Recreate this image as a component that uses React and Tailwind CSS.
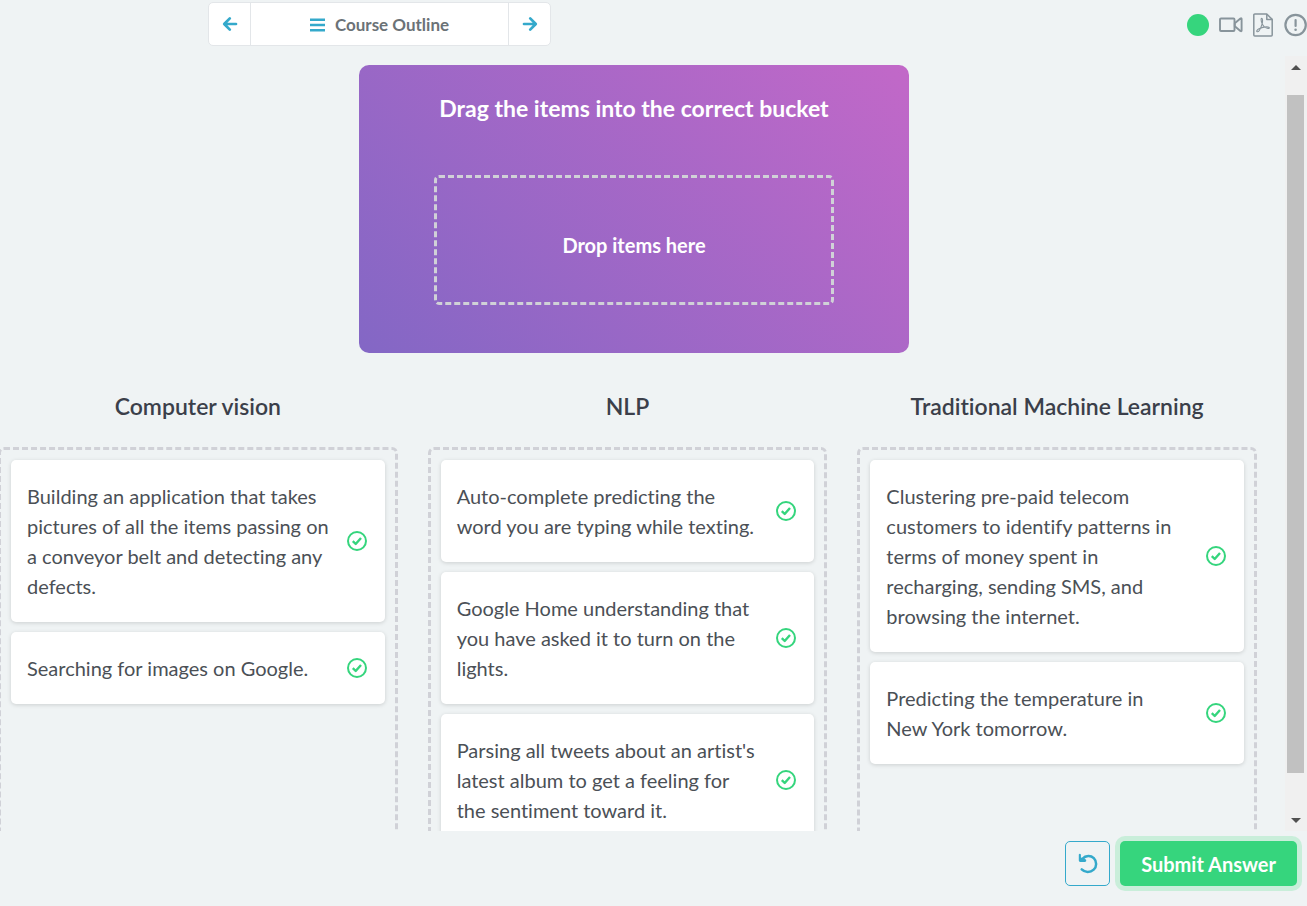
import React from "react";

const buckets = [
  {
    title: "Computer vision",
    items: [
      "Building an application that takes pictures of all the items passing on a conveyor belt and detecting any defects.",
      "Searching for images on Google.",
    ],
  },
  {
    title: "NLP",
    items: [
      "Auto-complete predicting the word you are typing while texting.",
      "Google Home understanding that you have asked it to turn on the lights.",
      "Parsing all tweets about an artist's latest album to get a feeling for the sentiment toward it.",
    ],
  },
  {
    title: "Traditional Machine Learning",
    items: [
      "Clustering pre-paid telecom customers to identify patterns in terms of money spent in recharging, sending SMS, and browsing the internet.",
      "Predicting the temperature in New York tomorrow.",
    ],
  },
];

function Arrow({ flip }) {
  return (
    <svg
      viewBox="0 0 16 16"
      className={flip ? "size-4 rotate-180" : "size-4"}
      fill="none"
      stroke="currentColor"
      strokeWidth="2.7"
      strokeLinecap="round"
      strokeLinejoin="round"
      aria-hidden="true"
    >
      <path d="M14 8H2.5M7.8 2.4L2.2 8l5.6 5.6" />
    </svg>
  );
}

function MenuIcon() {
  return (
    <svg viewBox="0 0 15 14" className="h-3.5 w-[15px]" fill="currentColor" aria-hidden="true">
      <path d="M0 .6h15V3H0zM0 5.800h15v2.400H0zM0 11h15v2.400H0z" />
    </svg>
  );
}

function VideoIcon() {
  return (
    <svg viewBox="0 0 24 16" className="h-4 w-6" fill="none" stroke="currentColor" strokeWidth="1.9" strokeLinejoin="round" aria-hidden="true">
      <rect x="1" y="1.5" width="14.5" height="12.5" rx="1" />
      <path d="M15.800 6.200L21.400 1.500Q22.600.900 22.600 2v11.500q0 1.100-1.200.500l-5.600-4.700z" />
    </svg>
  );
}

function PdfIcon() {
  return (
    <svg viewBox="0 0 20 24" className="h-6 w-5" fill="none" stroke="currentColor" strokeWidth="1.5" strokeLinejoin="round" aria-hidden="true">
      <path d="M13.800 1H1.800Q.8 1 .8 2v20q0 1 1 1h16.400q1 0 1-1V6.400z" />
      <path d="M13.800 1v5.400h5.400" />
      <path strokeWidth="1.100" d="M8.700 5.200c-.900 0-.700 2.800.300 5.200 1.200 2.800 3.400 4.600 6 5 1.800.200 1.800-1.200.200-1.400-3-.400-6.400.400-9.200 1.800-2.400 1.200-2.800 2.800-1.800 3 1.400.200 3.400-3.400 4.600-7 1-2.800 1.100-6.600-.100-6.600z" />
    </svg>
  );
}

function AlertIcon() {
  return (
    <svg viewBox="0 0 24 24" className="size-6" fill="none" stroke="currentColor" aria-hidden="true">
      <circle cx="12.600" cy="12" r="10.200" strokeWidth="2.200" />
      <path d="M12.600 7v6" strokeWidth="2.200" strokeLinecap="round" />
      <circle cx="12.600" cy="16.800" r="1.300" fill="currentColor" stroke="none" />
    </svg>
  );
}

function CheckIcon() {
  return (
    <svg viewBox="0 0 20 20" className="size-5 shrink-0 text-[#35d57d]" fill="none" stroke="currentColor" role="img" aria-label="Correct">
      <circle cx="10" cy="10" r="9" strokeWidth="2" />
      <path d="M5.800 10.200l2.900 2.800 5.300-6" strokeWidth="2.400" strokeLinejoin="round" />
    </svg>
  );
}

function ResetIcon() {
  return (
    <svg viewBox="0 0 20 22" className="h-[22px] w-5" fill="none" stroke="currentColor" strokeWidth="2.500" strokeLinecap="round" aria-hidden="true">
      <path d="M4.400 5.800C7.800 2.200 12.800 2.300 15.800 5.200c3.200 3.200 3.100 8.400-.100 11.400-3.400 3.100-8.800 3.100-12-.200" />
      <path fill="currentColor" stroke="none" d="M.800 1.400Q1.800 0 2.900 1.400V4.600L8 6.600Q9 8.200 7.200 8.900H2.200Q.800 8.900.800 7.500z" />
    </svg>
  );
}

function Bucket({ title, items }) {
  return (
    <section className="flex min-w-0 flex-col">
      <h2 className="mb-[26px] text-center text-[23px] leading-[30px] font-semibold text-[#3b3f4a]">{title}</h2>
      <ul className="flex min-h-[420px] grow flex-col gap-2.5 rounded-md border-[3px] border-dashed border-[#d0d1d7] p-2.5">
        {items.map((text) => (
          <li
            key={text}
            className="flex items-center justify-between gap-3 rounded-[5px] bg-white py-[21px] pr-[18px] pl-4 shadow-[0_1px_4px_rgba(0,0,0,0.15)]"
          >
            <p className="max-w-[302px] text-xl leading-[30px] text-[#4b5056]">{text}</p>
            <CheckIcon />
          </li>
        ))}
      </ul>
    </section>
  );
}

function ScrollTrack() {
  return (
    <div className="flex w-[22px] shrink-0 flex-col items-center bg-[#f0f0f0] py-2 pr-px" aria-hidden="true">
      <svg viewBox="0 0 10 5" className="mt-px h-[5px] w-2.5 shrink-0" fill="#505050">
        <path d="M0 5L5 0l5 5z" />
      </svg>
      <div className="mt-[25px] mb-[45px] w-[17px] grow bg-[#c1c1c1]" />
      <svg viewBox="0 0 10 5" className="h-[5px] w-2.5 shrink-0" fill="#505050">
        <path d="M0 0h10L5 5z" />
      </svg>
    </div>
  );
}

export default function App() {
  return (
    <div className="flex h-screen flex-col overflow-hidden bg-[#eff3f4] font-['Lato',sans-serif] [font-variant-ligatures:none]">
      <header className="flex h-14 shrink-0 items-start justify-between pt-0.5 pl-52">
        <nav className="flex h-11 divide-x divide-[#e3e6e9] overflow-hidden rounded-[5px] border border-[#e3e6e9] bg-white text-[#34a9cb]">
          <button type="button" aria-label="Previous lesson" className="grid w-[42px] place-items-center">
            <Arrow />
          </button>
          <button type="button" className="flex w-[258px] items-center justify-center gap-2.5 pt-0.5">
            <MenuIcon />
            <span className="text-[17px] leading-6 font-bold text-[#6b7277]">Course Outline</span>
          </button>
          <button type="button" aria-label="Next lesson" className="grid w-[41px] place-items-center">
            <Arrow flip />
          </button>
        </nav>
        <div className="flex h-[45px] items-center gap-2.5 text-[#88949b]">
          <span className="size-[22px] rounded-full bg-[#36d57d]" role="img" aria-label="Online" />
          <button type="button" aria-label="Video">
            <VideoIcon />
          </button>
          <button type="button" aria-label="Download PDF">
            <PdfIcon />
          </button>
          <button type="button" aria-label="Report an issue">
            <AlertIcon />
          </button>
        </div>
      </header>

      <div className="flex min-h-0 flex-1">
        <main className="min-w-0 flex-1 overflow-x-hidden overflow-y-auto [scrollbar-width:none]">
          <div className="flex justify-center pt-[9px] pr-[17px]">
            <section className="flex w-[550px] flex-col items-center rounded-[10px] bg-linear-[45deg,#8367c5,#c268c8] pt-[27px] pb-12 text-white">
              <h1 className="text-[23px] leading-8 font-bold">Drag the items into the correct bucket</h1>
              <div className="mt-[51px] flex h-[130px] w-[400px] items-center justify-center rounded-[5px] border-[3px] border-dashed border-[#d0d1d7] pt-2.5">
                <p className="text-xl leading-[30px] font-bold">Drop items here</p>
              </div>
            </section>
          </div>
          <div className="mt-[38px] mr-7 -ml-0.5 grid grid-cols-3 gap-[30px] pb-10">
            {buckets.map((bucket) => (
              <Bucket key={bucket.title} {...bucket} />
            ))}
          </div>
        </main>
        <ScrollTrack />
      </div>

      <footer className="flex shrink-0 justify-end gap-2.5 pt-2.5 pr-2.5 pb-5">
        <button
          type="button"
          aria-label="Reset"
          className="grid size-[45px] place-items-center rounded-[5px] border border-[#34a9cb] text-[#34a9cb]"
        >
          <ResetIcon />
        </button>
        <button
          type="submit"
          className="h-[45px] rounded-[5px] bg-[#36d57d] px-[21px] text-xl leading-[30px] font-bold text-white ring-5 ring-[#c9eeda]"
        >
          Submit Answer
        </button>
      </footer>
    </div>
  );
}
